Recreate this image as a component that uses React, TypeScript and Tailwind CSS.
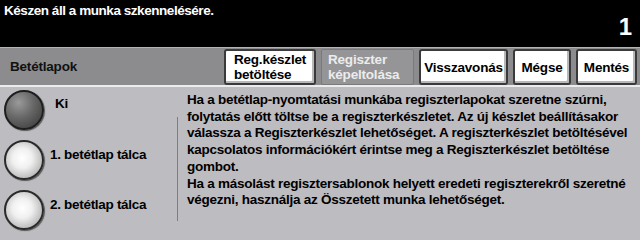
import React from "react";

const font = "font-['Liberation_Sans',Arial,sans-serif]";

function Btn({ children, disabled, w }: { children: React.ReactNode; disabled?: boolean; w: string }) {
  if (disabled) {
    return (
      <div className={`${w} h-[36px] flex items-center px-[6px] rounded-[2px] border border-[#7a7a7a] bg-[#959597] text-[#ececec] text-[13.5px] leading-[15px] font-bold tracking-[-0.2px]`}>
        {children}
      </div>
    );
  }
  return (
    <div className={`${w} h-[36px] flex items-center justify-center rounded-[3px] border-2 border-[#3a3a3a] bg-white shadow-[inset_-2px_-2px_0_#b8b8b8] text-black text-[13.5px] leading-[15px] font-bold tracking-[-0.2px]`}>
      {children}
    </div>
  );
}

function Radio({ on, label }: { on?: boolean; label: string }) {
  return (
    <div className="flex h-[50px] items-start">
      <div
        className={
          on
            ? "w-[40px] h-[40px] shrink-0 rounded-full border-2 border-[#1e1e1e] bg-[radial-gradient(circle_at_35%_30%,#9a9a9a_0%,#666_45%,#353535_100%)] shadow-[1px_1px_1px_#555]"
            : "w-[40px] h-[40px] shrink-0 rounded-full border-2 border-[#2a2a2a] bg-[radial-gradient(circle_at_45%_45%,#ffffff_0%,#f0f0f0_35%,#bdbdbd_72%,#6e6e6e_100%)] shadow-[1px_1px_1px_#555]"
        }
      />
      <div className={`text-[13.5px] font-bold text-black tracking-[-0.3px] ${on ? "ml-[11px] mt-[4px]" : "ml-[6px] mt-[5px]"}`}>{label}</div>
    </div>
  );
}

export default function App() {
  return (
    <div className={`w-[640px] h-[240px] flex flex-col overflow-hidden ${font}`}>
      <div className="h-[48px] bg-black flex justify-between px-[4px]">
        <div className="text-white text-[13.5px] font-bold mt-[1px] tracking-[-0.45px]">Készen áll a munka szkennelésére.</div>
        <div className="text-white text-[24px] font-bold mt-[9px] mr-[4px]">1</div>
      </div>
      <div className="h-[39px] border-t border-[#b4b4b4] bg-[#8c8c8e] flex items-end">
        <div className="w-[224px] pl-[10px] pb-[8px] text-[13.5px] font-bold text-[#111] tracking-[-0.2px]">Betétlapok</div>
        <div className="flex gap-[5px] items-end">
          <Btn w="w-[92px]">
            <span>Reg.készlet<br />betöltése</span>
          </Btn>
          <Btn w="w-[93px]" disabled>
            <span>Regiszter<br />képeltolása</span>
          </Btn>
          <Btn w="w-[89px]">Visszavonás</Btn>
          <Btn w="w-[58px]">Mégse</Btn>
          <Btn w="w-[61px]">Mentés</Btn>
        </div>
      </div>
      <div className="h-[2px] bg-[#ececec]" />
      <div className="flex-1 bg-[#bdbcc0] flex">
        <div className="w-[177px] pl-[4px] pt-[3px]">
          <Radio on label="Ki" />
          <Radio label="1. betétlap tálca" />
          <Radio label="2. betétlap tálca" />
        </div>
        <div className="w-[1px] bg-[#7e7e7e] mt-[30px] h-[104px]" />
        <div className="pl-[9px] pt-[5px] text-[13.5px] leading-[16.7px] font-bold text-black whitespace-nowrap tracking-[-0.25px]">
          Ha a betétlap-nyomtatási munkába regiszterlapokat szeretne szúrni,<br />
          folytatás előtt töltse be a regiszterkészletet. Az új készlet beállításakor<br />
          válassza a Regiszterkészlet lehetőséget. A regiszterkészlet betöltésével<br />
          kapcsolatos információkért érintse meg a Regiszterkészlet betöltése<br />
          gombot.<br />
          Ha a másolást regisztersablonok helyett eredeti regiszterekről szeretné<br />
          végezni, használja az Összetett munka lehetőséget.
        </div>
      </div>
    </div>
  );
}
